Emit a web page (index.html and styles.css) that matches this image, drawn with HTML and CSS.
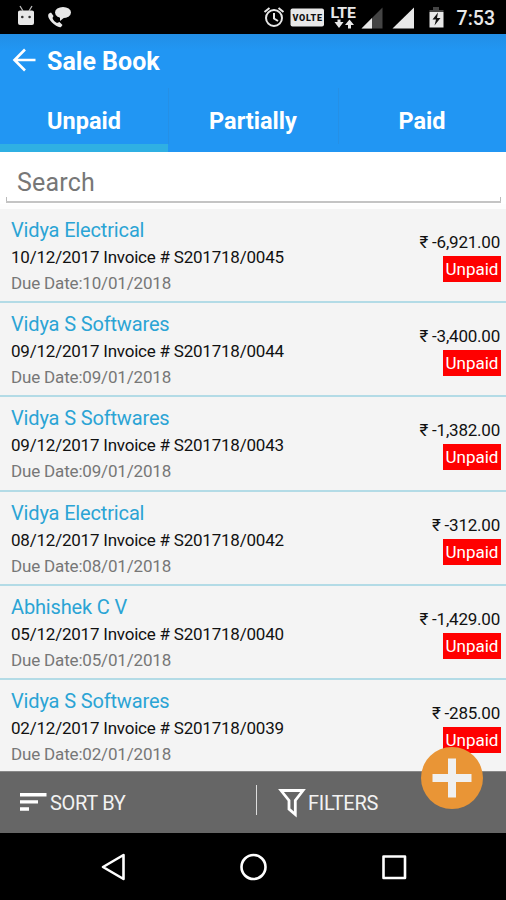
FILE: index.html
```html
<!DOCTYPE html>
<html lang="en">
<head>
  <meta charset="UTF-8">
  <meta name="viewport" content="width=device-width, initial-scale=1.0">
  <title>Sale Book</title>
  <link rel="stylesheet" href="styles.css">
</head>
<body>
  <div class="status-bar">
    <svg class="status-icons" width="506" height="34" viewBox="0 0 506 34">
      <g fill="#e8e8e8">
        <path d="M18 12 q0-1.500 2-1.500 h12 q2 0 2 1.500 v11 q0 2-2 2 h-12 q-2 0-2-2z"/>
        <path d="M20 6l3 5M32 6l-3 5" stroke="#bbb" stroke-width="1.3"/>
        <circle cx="22.300" cy="17" r="1.300" fill="#333"/>
        <circle cx="29.600" cy="17" r="1.300" fill="#333"/>
        <ellipse cx="63" cy="12.500" rx="8" ry="5.500"/>
        <path d="M60 16v5l5-4z"/>
        <path d="M49 13.500c-2 2 0 6 3 9s7 5.500 9 4.500l1.500-2-3-3-2.500 1c-2-1-4-3-4.500-5l1-2-2.500-3.500z"/>
        <rect x="290.500" y="8.500" width="33.500" height="18" rx="2"/>
        <path d="M337.500 19.500h3v2.500h3l-4.500 6-4.500-6h3zM349.500 19.500l4.500 5.500h-3v3.500h-3v-3.500h-3z"/>
        <path d="M382.500 7.500v21h-21z" fill="#444"/>
        <path d="M372 18v10.500h-10.500z"/>
        <path d="M414 7.500v21h-21.500z"/>
        <path d="M433 7h6v3h4.500v2h-14v-2h3.500z" fill="#444"/>
        <path d="M429.500 12h14v15.500h-14z"/>
        <path d="M438 12.500l-5.500 7h3.500l-1.500 6 6-7.500h-3.500z" fill="#111"/>
      </g>
      <g fill="none" stroke="#e8e8e8" stroke-width="2">
        <circle cx="274" cy="18" r="8"/>
        <path d="M274 13v5.500l4 2.500M264.500 12l5-4M283.500 12l-5-4"/>
      </g>
      <text class="volte" x="292.500" y="21.200" textLength="29.500">VOLTE</text>
      <text class="lte" x="330.500" y="18" textLength="25.500" lengthAdjust="spacingAndGlyphs">LTE</text>
    </svg>
    <span class="clock">7:53</span>
  </div>

  <header class="app-header">
    <div class="title-bar">
      <svg width="24" height="24" viewBox="0 0 24 24" fill="none" stroke="#fff" stroke-width="2.600">
        <path d="M23.500 12H2.500M13 1.500L2.500 12 13 22.500"/>
      </svg>
      <h1>Sale Book</h1>
    </div>
    <nav class="tabs">
      <a class="tab active">Unpaid</a>
      <a class="tab">Partially</a>
      <a class="tab">Paid</a>
    </nav>
  </header>

  <div class="search">
    <div class="search-field">Search</div>
  </div>

  <main class="invoice-list">
    <div class="invoice">
      <div class="info">
        <div class="name">Vidya Electrical</div>
        <div class="number">10/12/2017 Invoice # S201718/0045</div>
        <div class="due">Due Date:10/01/2018</div>
      </div>
      <div class="amount-col">
        <div class="amount">₹ -6,921.00</div>
        <div class="badge">Unpaid</div>
      </div>
    </div>
    <div class="invoice">
      <div class="info">
        <div class="name">Vidya S Softwares</div>
        <div class="number">09/12/2017 Invoice # S201718/0044</div>
        <div class="due">Due Date:09/01/2018</div>
      </div>
      <div class="amount-col">
        <div class="amount">₹ -3,400.00</div>
        <div class="badge">Unpaid</div>
      </div>
    </div>
    <div class="invoice">
      <div class="info">
        <div class="name">Vidya S Softwares</div>
        <div class="number">09/12/2017 Invoice # S201718/0043</div>
        <div class="due">Due Date:09/01/2018</div>
      </div>
      <div class="amount-col">
        <div class="amount">₹ -1,382.00</div>
        <div class="badge">Unpaid</div>
      </div>
    </div>
    <div class="invoice">
      <div class="info">
        <div class="name">Vidya Electrical</div>
        <div class="number">08/12/2017 Invoice # S201718/0042</div>
        <div class="due">Due Date:08/01/2018</div>
      </div>
      <div class="amount-col">
        <div class="amount">₹ -312.00</div>
        <div class="badge">Unpaid</div>
      </div>
    </div>
    <div class="invoice">
      <div class="info">
        <div class="name">Abhishek C V</div>
        <div class="number">05/12/2017 Invoice # S201718/0040</div>
        <div class="due">Due Date:05/01/2018</div>
      </div>
      <div class="amount-col">
        <div class="amount">₹ -1,429.00</div>
        <div class="badge">Unpaid</div>
      </div>
    </div>
    <div class="invoice">
      <div class="info">
        <div class="name">Vidya S Softwares</div>
        <div class="number">02/12/2017 Invoice # S201718/0039</div>
        <div class="due">Due Date:02/01/2018</div>
      </div>
      <div class="amount-col">
        <div class="amount">₹ -285.00</div>
        <div class="badge">Unpaid</div>
      </div>
    </div>
  </main>

  <footer class="action-bar">
    <div class="action sort">
      <svg width="27" height="20" viewBox="0 0 27 20" fill="#fff">
        <path d="M0 1h26.500v3.500H0zM0 8.300h18v3.300H0zM0 15.300h9v3.400H0z"/>
      </svg>
      <span>SORT BY</span>
    </div>
    <div class="action filters">
      <svg width="28" height="30" viewBox="0 0 28 30" fill="none" stroke="#fff" stroke-width="2.800">
        <path d="M3 2.500h22L17.300 12.500V26.500L11 21V12.500z"/>
      </svg>
      <span>FILTERS</span>
    </div>
    <button class="add-btn" aria-label="Add">
      <svg width="62" height="62" viewBox="0 0 62 62" fill="#f0f0f0">
        <path d="M27 11.500h8v15.500h15.500v8H35v15.500h-8V35H11.500v-8H27z"/>
      </svg>
    </button>
  </footer>

  <div class="nav-bar">
    <svg width="26" height="28" viewBox="0 0 26 28" fill="none" stroke="#fff" stroke-width="2.600" stroke-linejoin="round">
      <path d="M23.500 2v24L3 14z"/>
    </svg>
    <svg width="28" height="28" viewBox="0 0 28 28" fill="none" stroke="#fff" stroke-width="2.600">
      <circle cx="13.500" cy="14" r="12"/>
    </svg>
    <svg width="26" height="28" viewBox="0 0 26 28" fill="none" stroke="#fff" stroke-width="2.600" stroke-linejoin="round">
      <rect x="2.500" y="3.500" width="21.500" height="21.500"/>
    </svg>
  </div>
</body>
</html>
```
FILE: styles.css
```css
* {
  box-sizing: border-box;
}

body {
  margin: 0;
  width: 506px;
  height: 900px;
  display: flex;
  flex-direction: column;
  overflow: hidden;
  background: #fff;
  font-family: Roboto, "Liberation Sans", sans-serif;
}

.status-bar {
  display: grid;
  height: 34px;
  background: #000;
  color: #e8e8e8;
}

.status-bar > * { grid-area: 1 / 1; }
.volte { font-size: 9px; font-weight: 900; fill: #111; }
.lte { font-size: 15px; font-weight: 700; fill: #e8e8e8; }

.clock {
  justify-self: end;
  padding-right: 11px;
  font-size: 19.5px;
  font-weight: 500;
  line-height: 37px;
}

.app-header {
  height: 118px;
  background: linear-gradient(#228ee6, #2196f3 16px);
  color: #fff;
}

.title-bar {
  display: flex;
  align-items: center;
  gap: 11px;
  height: 54px;
  padding-left: 12px;
}

.title-bar svg { margin-top: -2px; }
.title-bar h1 { margin: 0; padding-top: 1px; font-size: 25px; font-weight: 700; }

.tabs {
  display: grid;
  grid-template-columns: 168px 170px 168px;
  height: 64px;
}

.tab {
  height: 64px;
  padding-top: 6px;
  border-bottom: 8px solid transparent;
  font-size: 23.5px;
  font-weight: 700;
  line-height: 54px;
  text-align: center;
}

.tab.active { border-bottom-color: #2fb0e3; }
.tab + .tab { box-shadow: inset 1px 0 #2590e6; }

.search {
  height: 57px;
  padding: 0 5px 0 6px;
  border-bottom: 5px solid #fdfdfd;
}

.search-field {
  height: 51px;
  padding-left: 11px;
  border-bottom: 2px solid #c4c4c4;
  background:
    linear-gradient(#bbb, #bbb) 0 100% / 1px 4px no-repeat,
    linear-gradient(#bbb, #bbb) 100% 100% / 1px 4px no-repeat;
  color: #777;
  font-size: 25px;
  letter-spacing: 0.2px;
  line-height: 61px;
}

.invoice-list {
  height: 562px;
  overflow: hidden;
  background: #f4f4f4;
}

.invoice {
  display: flex;
  justify-content: space-between;
  height: 94.2px;
  padding: 8px 5px 0 11px;
  border-bottom: 2px solid #b3dbe6;
}

.name { font-size: 20px; letter-spacing: -0.15px; line-height: 27px; color: #2ba4d5; }
.number { font-size: 17px; letter-spacing: -0.22px; line-height: 27px; color: #111; }
.due { font-size: 17px; letter-spacing: -0.17px; line-height: 25px; color: #777; }

.amount-col {
  display: flex;
  flex-direction: column;
  align-items: flex-end;
  padding-top: 12px;
}

.amount {
  padding-right: 1px;
  font-size: 17px;
  letter-spacing: -0.22px;
  line-height: 27px;
  color: #111;
}

.badge {
  width: 58px;
  height: 26px;
  background: #f00;
  color: #fff;
  font-size: 17px;
  line-height: 27px;
  text-align: center;
}

.action-bar {
  position: relative;
  display: grid;
  grid-template-columns: 256px 250px;
  align-items: center;
  height: 62px;
  background: #666;
  box-shadow: inset 0 1px #888;
  color: #f2f2f2;
}

.action { display: flex; align-items: center; font-size: 20px; letter-spacing: -0.3px; }
.sort { gap: 3px; padding-left: 20px; }
.sort span { padding-top: 2px; }
.filters { gap: 2px; padding-left: 21px; height: 30px; margin-top: -4px; border-left: 1.5px solid #ddd; }
.filters svg { margin-top: 5px; }
.filters span { padding-top: 5px; }

.add-btn {
  position: absolute;
  top: -24px;
  right: 23px;
  width: 62px;
  height: 62px;
  padding: 0;
  border: 0;
  border-radius: 50%;
  background: #e99536;
}

.nav-bar {
  display: flex;
  align-items: center;
  justify-content: space-between;
  height: 67px;
  padding: 0 99px 0 100px;
  background: #000;
}
```
